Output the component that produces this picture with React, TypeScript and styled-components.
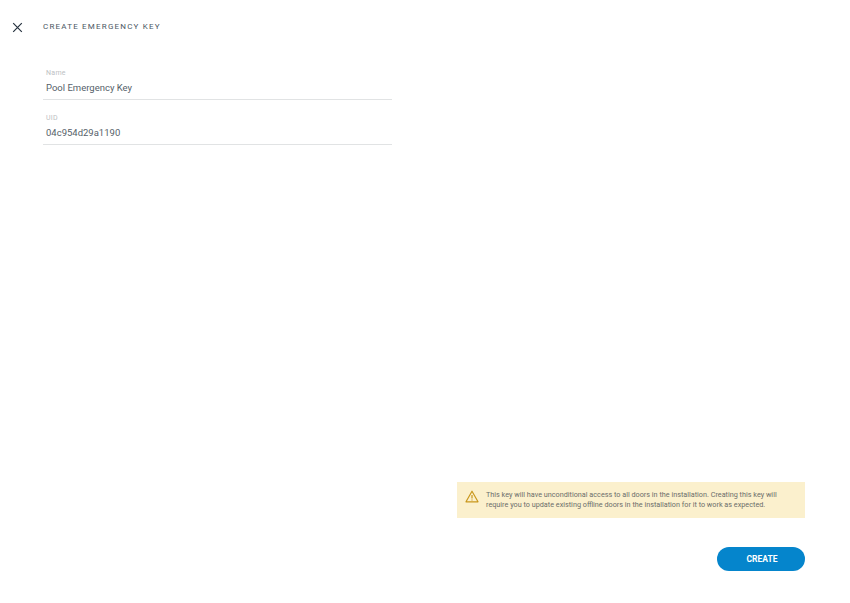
import React from "react";
import styled, { createGlobalStyle } from "styled-components";

const GlobalStyle = createGlobalStyle`
  html, body {
    margin: 0;
    padding: 0;
    background: #fff;
    font-family: Roboto, "Liberation Sans", sans-serif;
  }
`;

const Page = styled.div`
  width: 850px;
  height: 603px;
  display: flex;
  flex-direction: column;
  box-sizing: border-box;
  padding: 0 45px 32px 0;
  overflow: hidden;
`;

const Header = styled.header`
  display: flex;
  align-items: center;
  height: 54px;
  padding-left: 12px;
`;

const CloseButton = styled.button`
  width: 11px;
  height: 11px;
  padding: 0;
  border: 0;
  background: none;
  display: flex;
  margin-right: 20px;
  color: #26323f;
`;

const Title = styled.h1`
  margin: 0;
  font-size: 8px;
  line-height: 12px;
  font-weight: 400;
  letter-spacing: 1.2px;
  color: #4b5763;
  text-transform: uppercase;
`;

const Form = styled.form`
  display: flex;
  flex-direction: column;
  gap: 14px;
  width: 349px;
  margin: 15px 0 0 43px;
`;

const Field = styled.div`
  display: flex;
  flex-direction: column;
  padding: 0 3px 3px;
  border-bottom: 1px solid #e1e3e4;
`;

const Label = styled.label`
  font-size: 7px;
  line-height: 9px;
  color: #bcc0c3;
  letter-spacing: 0.3px;
`;

const Value = styled.div`
  font-size: 9.5px;
  line-height: 16px;
  margin-top: 2px;
  color: #565f6a;
`;

const Footer = styled.div`
  margin-top: auto;
  display: flex;
  flex-direction: column;
  align-items: flex-end;
  gap: 29px;
`;

const Warning = styled.div`
  width: 348px;
  height: 36px;
  box-sizing: border-box;
  display: flex;
  align-items: center;
  gap: 7px;
  padding-left: 8px;
  background: #fbf0cd;
`;

const WarningIcon = styled.svg`
  flex: none;
  margin-bottom: 8px;
`;

const WarningText = styled.p`
  margin: 0;
  font-size: 7.25px;
  line-height: 10px;
  color: #6b6e6b;
`;

const CreateButton = styled.button`
  width: 88px;
  height: 24px;
  border: 0;
  border-radius: 12px;
  background: #0585cc;
  color: #fff;
  font-family: inherit;
  font-size: 8.5px;
  font-weight: 700;
  padding: 0 0 0 2px;
  text-transform: uppercase;
`;

export default function App() {
  return (
    <>
      <GlobalStyle />
      <Page>
        <Header>
          <CloseButton type="button" aria-label="Close">
            <svg width="11" height="11" viewBox="0 0 11 11" fill="none" stroke="currentColor" strokeWidth="1.2">
              <path d="M1.2 1.2l8.6 8.6M9.8 1.2l-8.6 8.6" />
            </svg>
          </CloseButton>
          <Title>Create Emergency Key</Title>
        </Header>
        <Form>
          <Field>
            <Label>Name</Label>
            <Value>Pool Emergency Key</Value>
          </Field>
          <Field>
            <Label>UID</Label>
            <Value>04c954d29a1190</Value>
          </Field>
        </Form>
        <Footer>
          <Warning>
            <WarningIcon width="14" height="13" viewBox="0 0 14 13" fill="none" stroke="#c9971c" strokeWidth="1.2">
              <path d="M7 1.2L13 11.8H1z" strokeLinejoin="round" />
              <path d="M7 5v3.6M7 9.6v1" />
            </WarningIcon>
            <WarningText>
              This key will have unconditional access to all doors in the installation. Creating this key will
              <br />
              require you to update existing offline doors in the installation for it to work as expected.
            </WarningText>
          </Warning>
          <CreateButton type="button">Create</CreateButton>
        </Footer>
      </Page>
    </>
  );
}
